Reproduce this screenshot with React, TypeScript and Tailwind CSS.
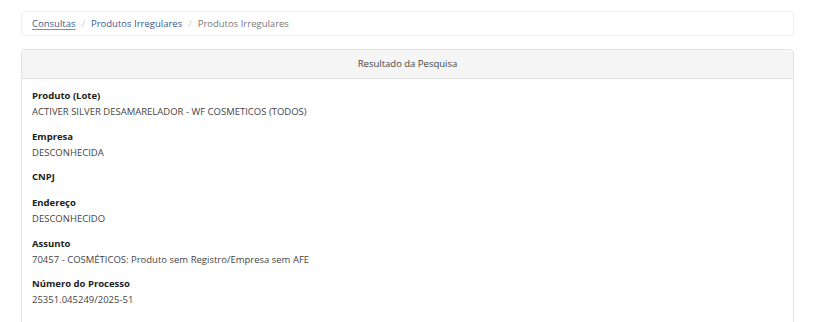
const fields = [
  { label: 'Produto (Lote)', value: 'ACTIVER SILVER DESAMARELADOR - WF COSMETICOS (TODOS)' },
  { label: 'Empresa', value: 'DESCONHECIDA' },
  { label: 'CNPJ', value: '' },
  { label: 'Endereço', value: 'DESCONHECIDO' },
  { label: 'Assunto', value: '70457 - COSMÉTICOS: Produto sem Registro/Empresa sem AFE' },
  { label: 'Número do Processo', value: '25351.045249/2025-51' },
];

export default function App() {
  return (
    <div
      className="w-[828px] h-[322px] overflow-hidden bg-white text-[#333] pl-[21px] pr-[34px] pt-[11px]"
      style={{ fontFamily: "'Open Sans', 'Noto Sans', sans-serif" }}
    >
      {/* Breadcrumb */}
      <div className="h-[25px] border border-[#eeeeee] rounded-[3px] flex items-center px-[10px] pt-[1px] text-[9.5px] mb-[13px]">
        <a className="text-[#3a5b8c] underline underline-offset-2 decoration-[#7d8fad]">Consultas</a>
        <span className="text-[#cccccc] px-[6px]">/</span>
        <a className="text-[#3a5b8c]">Produtos Irregulares</a>
        <span className="text-[#cccccc] px-[6px]">/</span>
        <span className="text-[#777777]">Produtos Irregulares</span>
      </div>

      {/* Panel */}
      <div className="border border-[#e3e3e3] rounded-[3px] h-[300px]">
        <div className="h-[29px] bg-[#f5f5f5] border-b border-[#e3e3e3] flex items-center justify-center pt-[1px] text-[9.5px] text-[#444]">
          Resultado da Pesquisa
        </div>
        <div className="px-[10px] pt-[8px] pb-[8px] border-b border-[#e3e3e3]">
          {fields.map((f) => (
            <div key={f.label} className="mb-[7.5px]">
              <div className="text-[9.5px] font-bold leading-[17px] text-[#222]">{f.label}</div>
              {f.value ? (
                <div className="text-[9.5px] leading-[16px] text-[#444]">{f.value}</div>
              ) : (
                <div className="h-[1.5px]" />
              )}
            </div>
          ))}
        </div>
      </div>
    </div>
  );
}
